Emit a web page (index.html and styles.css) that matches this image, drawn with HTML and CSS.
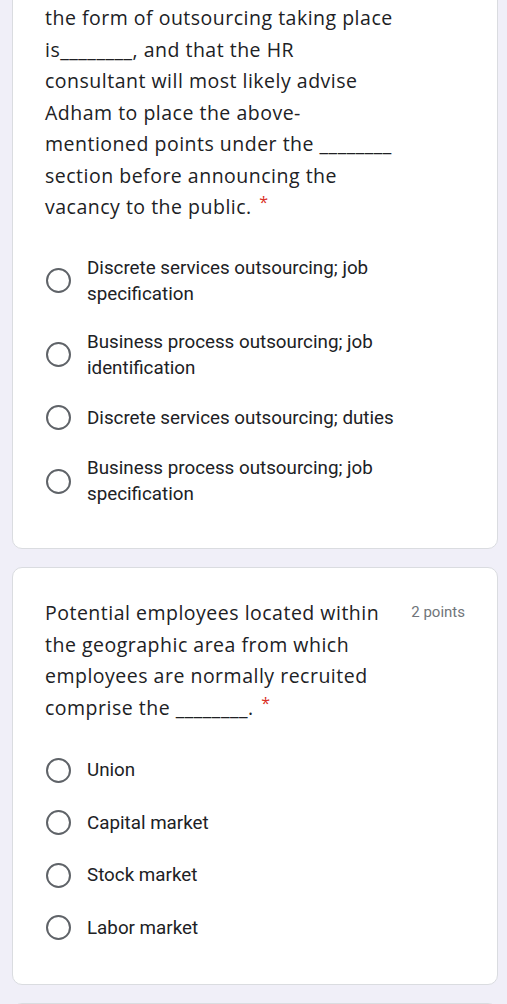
FILE: index.html
```html
<!DOCTYPE html>
<html lang="en">
  <head>
    <meta charset="UTF-8" />
    <meta name="viewport" content="width=device-width, initial-scale=1.0" />
    <title>Quiz</title>
    <link rel="stylesheet" href="styles.css">
  </head>
  <body>
    <div class="form">
      <div class="card card-cut">
        <div class="question">
          <div class="question-text">
            the form of outsourcing taking place<br />
            is________, and that the HR<br />
            consultant will most likely advise<br />
            Adham to place the above-<br />
            mentioned points under the ________<br />
            section before announcing the<br />
            vacancy to the public. <span class="required">*</span>
          </div>
        </div>

        <div class="options">
          <label class="option">
            <span class="radio"></span>
            <span class="option-text">Discrete services outsourcing; job specification</span>
          </label>
          <label class="option">
            <span class="radio"></span>
            <span class="option-text">Business process outsourcing; job identification</span>
          </label>
          <label class="option">
            <span class="radio"></span>
            <span class="option-text">Discrete services outsourcing; duties</span>
          </label>
          <label class="option">
            <span class="radio"></span>
            <span class="option-text">Business process outsourcing; job specification</span>
          </label>
        </div>
      </div>

      <div class="card">
        <div class="question">
          <div class="question-text">
            Potential employees located within<br />
            the geographic area from which<br />
            employees are normally recruited<br />
            comprise the ________. <span class="required">*</span>
          </div>
          <div class="points">2 points</div>
        </div>

        <div class="options">
          <label class="option">
            <span class="radio"></span>
            <span class="option-text">Union</span>
          </label>
          <label class="option">
            <span class="radio"></span>
            <span class="option-text">Capital market</span>
          </label>
          <label class="option">
            <span class="radio"></span>
            <span class="option-text">Stock market</span>
          </label>
          <label class="option">
            <span class="radio"></span>
            <span class="option-text">Labor market</span>
          </label>
        </div>
      </div>

      <div class="card card-next"></div>
    </div>
  </body>
</html>
```

FILE: styles.css
```css
* {
  margin: 0;
  padding: 0;
  box-sizing: border-box;
}

body {
  background-color: #f0eff8;
  font-family: "Open Sans", sans-serif;
  color: #202124;
  overflow: hidden;
}

.form {
  display: flex;
  flex-direction: column;
  gap: 18px;
  padding: 0 9px 0 12px;
}

.card {
  background-color: #ffffff;
  border: 1px solid #dadce0;
  border-radius: 10px;
  padding: 29px 32px 30px 32px;
}

.card-cut {
  margin-top: -40px;
  padding-top: 41px;
}

.card-next {
  height: 80px;
}

.question {
  display: flex;
  justify-content: space-between;
  align-items: flex-start;
  gap: 12px;
}

.question-text {
  font-size: 19.5px;
  letter-spacing: 0.5px;
  line-height: 31.5px;
  white-space: nowrap;
}

.required {
  color: #d93025;
  font-size: 16px;
  line-height: 1;
  vertical-align: 6px;
  margin-left: 2px;
}

.points {
  flex-shrink: 0;
  font-family: Roboto, sans-serif;
  font-size: 15px;
  line-height: 31.5px;
  color: #70757a;
}

.options {
  margin-top: 21px;
  display: flex;
  flex-direction: column;
}

.option {
  display: flex;
  align-items: center;
  min-height: 52.5px;
  padding: 11px 0;
  cursor: pointer;
}

.radio {
  flex-shrink: 0;
  width: 25px;
  height: 25px;
  border: 2.5px solid #5f6368;
  border-radius: 50%;
  margin-left: 1px;
  margin-right: 16px;
}

.option-text {
  flex: 1;
  font-family: Roboto, sans-serif;
  font-size: 18.8px;
  line-height: 26px;
  color: #202124;
}
```
